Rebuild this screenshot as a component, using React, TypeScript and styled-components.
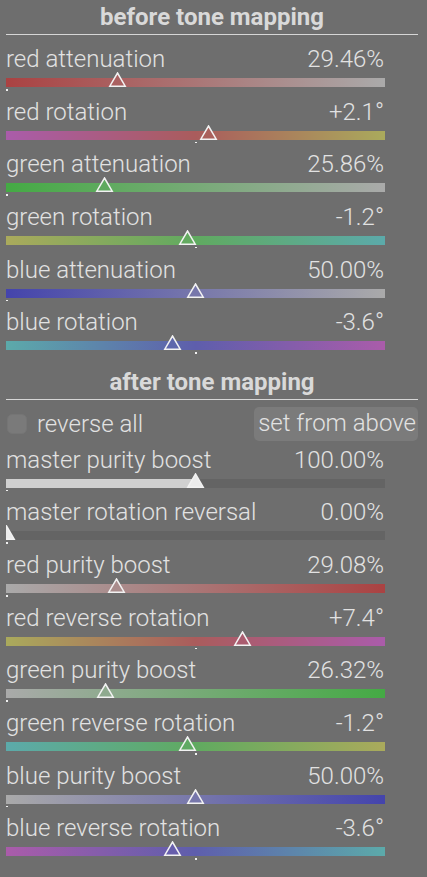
import * as React from 'react';
import styled, { createGlobalStyle } from 'styled-components';

type RGB = [number, number, number];

const GRAY: RGB = [170, 170, 170];
const RED: RGB = [170, 66, 66];
const GREEN: RGB = [68, 170, 68];
const BLUE: RGB = [68, 68, 172];
const RED_H: RGB = [170, 92, 92];
const GREEN_H: RGB = [96, 170, 96];
const BLUE_H: RGB = [94, 94, 172];
const MAGENTA: RGB = [170, 92, 170];
const OLIVE: RGB = [170, 170, 92];
const CYAN: RGB = [92, 170, 170];

const BAR_WIDTH = 379;

const GlobalStyle = createGlobalStyle`
  html, body {
    margin: 0;
    background: #6e6e6e;
  }
  body {
    font-family: Roboto, "Noto Sans", sans-serif;
    color: #e2e2e2;
  }
`;

const Panel = styled.div`
  width: 412px;
  padding: 3px 0 0 6px;
`;

const SectionHeader = styled.div<{ $gap?: number }>`
  margin-top: ${p => p.$gap ?? 0}px;
  padding-bottom: 3px;
  border-bottom: 1px solid #d6d6d6;
  font-size: 24px;
  font-weight: 700;
  line-height: 28px;
  text-align: center;
  color: #d9d9d9;
`;

const SliderList = styled.div<{ $gap: number }>`
  display: flex;
  flex-direction: column;
  margin-top: ${p => p.$gap}px;
`;

const Row = styled.div`
  width: ${BAR_WIDTH}px;
  height: 52.65px;
`;

const LabelLine = styled.div`
  display: flex;
  justify-content: space-between;
  align-items: baseline;
  font-size: 24px;
  font-weight: 300;
  line-height: 28px;
  white-space: nowrap;
`;

const Value = styled.span`
  padding-right: 1px;
`;

const Track = styled.div`
  position: relative;
  height: 19px;
  margin-top: -1px;
  overflow: hidden;
`;

const Bar = styled.div<{ $bg: string }>`
  margin-top: 6px;
  height: 9px;
  background: ${p => p.$bg};
`;

const Thumb = styled.svg`
  position: absolute;
  top: 0;
  width: 17px;
  height: 15px;
  overflow: visible;
`;

const Marker = styled.div`
  position: absolute;
  top: 17px;
  width: 2px;
  height: 1.5px;
  background: #f0f0f0;
`;

const OptionsRow = styled.div`
  display: flex;
  align-items: center;
  justify-content: space-between;
  margin-top: 7px;
  height: 34px;
  font-size: 24px;
  font-weight: 300;
`;

const CheckLabel = styled.label`
  display: flex;
  align-items: center;
  gap: 10px;
  padding-left: 1px;
`;

const CheckBox = styled.span`
  width: 20px;
  height: 20px;
  box-sizing: border-box;
  border-radius: 5px;
  background: #7a7a7a;
  border: 1px solid #757575;
`;

const Button = styled.button`
  height: 34px;
  padding: 0 2px 2px 4px;
  border: none;
  border-radius: 5px;
  background: #7b7b7b;
  color: #e2e2e2;
  font-family: inherit;
  font-size: 24px;
  font-weight: 300;
  line-height: 28px;
`;

const mix = (a: RGB, b: RGB, t: number): RGB =>
  [0, 1, 2].map(i => Math.round(a[i] + (b[i] - a[i]) * t)) as RGB;

const sample = (stops: RGB[], t: number): RGB => {
  const seg = stops.length - 1;
  const x = Math.min(Math.max(t, 0), 1) * seg;
  const i = Math.min(Math.floor(x), seg - 1);
  return mix(stops[i], stops[i + 1], x - i);
};

const css = (c: RGB) => `rgb(${c[0]}, ${c[1]}, ${c[2]})`;

const gradient = (stops: RGB[]) => `linear-gradient(to right, ${stops.map(css).join(', ')})`;

interface SliderProps {
  label: string;
  value: string;
  pos: number;
  marker: number;
  stops?: RGB[];
  fill?: boolean;
}

const Slider = ({ label, value, pos, marker, stops, fill }: SliderProps) => {
  const x = pos * BAR_WIDTH;
  let bg = '#646464';
  let thumb = '#ececec';
  if (stops) {
    bg = gradient(stops);
    thumb = css(sample(stops, pos));
  } else if (fill) {
    bg = `linear-gradient(to right, #d0d0d0 ${x}px, #646464 ${x}px)`;
  }
  return (
    <Row>
      <LabelLine>
        <span>{label}</span>
        <Value>{value}</Value>
      </LabelLine>
      <Track>
        <Bar $bg={bg} />
        <Marker style={{ left: marker * (BAR_WIDTH - 2) }} />
        <Thumb style={{ left: x - 8.5 }} viewBox="0 0 17 15">
          <polygon points="8.5,1 16.2,14.2 0.8,14.2" fill={thumb} stroke="#f2f2f2" strokeWidth="1.5" strokeLinejoin="miter" />
        </Thumb>
      </Track>
    </Row>
  );
};

const rot = (deg: number) => 0.5 + deg / 60;

const before: SliderProps[] = [
  { label: 'red attenuation', value: '29.46%', pos: 0.2946, marker: 0, stops: [RED, GRAY] },
  { label: 'red rotation', value: '+2.1°', pos: rot(2.1), marker: 0.5, stops: [MAGENTA, RED_H, OLIVE] },
  { label: 'green attenuation', value: '25.86%', pos: 0.2586, marker: 0, stops: [GREEN, GRAY] },
  { label: 'green rotation', value: '-1.2°', pos: rot(-1.2), marker: 0.5, stops: [OLIVE, GREEN_H, CYAN] },
  { label: 'blue attenuation', value: '50.00%', pos: 0.5, marker: 0, stops: [BLUE, GRAY] },
  { label: 'blue rotation', value: '-3.6°', pos: rot(-3.6), marker: 0.5, stops: [CYAN, BLUE_H, MAGENTA] },
];

const after: SliderProps[] = [
  { label: 'master purity boost', value: '100.00%', pos: 0.5, marker: 0, fill: true },
  { label: 'master rotation reversal', value: '0.00%', pos: 0, marker: 0 },
  { label: 'red purity boost', value: '29.08%', pos: 0.2908, marker: 0, stops: [GRAY, RED] },
  { label: 'red reverse rotation', value: '+7.4°', pos: rot(7.4), marker: 0.5, stops: [OLIVE, RED_H, MAGENTA] },
  { label: 'green purity boost', value: '26.32%', pos: 0.2632, marker: 0, stops: [GRAY, GREEN] },
  { label: 'green reverse rotation', value: '-1.2°', pos: rot(-1.2), marker: 0.5, stops: [CYAN, GREEN_H, OLIVE] },
  { label: 'blue purity boost', value: '50.00%', pos: 0.5, marker: 0, stops: [GRAY, BLUE] },
  { label: 'blue reverse rotation', value: '-3.6°', pos: rot(-3.6), marker: 0.5, stops: [MAGENTA, BLUE_H, CYAN] },
];

const App = () => (
  <>
    <GlobalStyle />
    <Panel>
      <SectionHeader>before tone mapping</SectionHeader>
      <SliderList $gap={10}>
        {before.map(s => <Slider key={s.label} {...s} />)}
      </SliderList>
      <SectionHeader $gap={7}>after tone mapping</SectionHeader>
      <OptionsRow>
        <CheckLabel>
          <CheckBox />
          reverse all
        </CheckLabel>
        <Button>set from above</Button>
      </OptionsRow>
      <SliderList $gap={5}>
        {after.map(s => <Slider key={s.label} {...s} />)}
      </SliderList>
    </Panel>
  </>
);

export default App;
